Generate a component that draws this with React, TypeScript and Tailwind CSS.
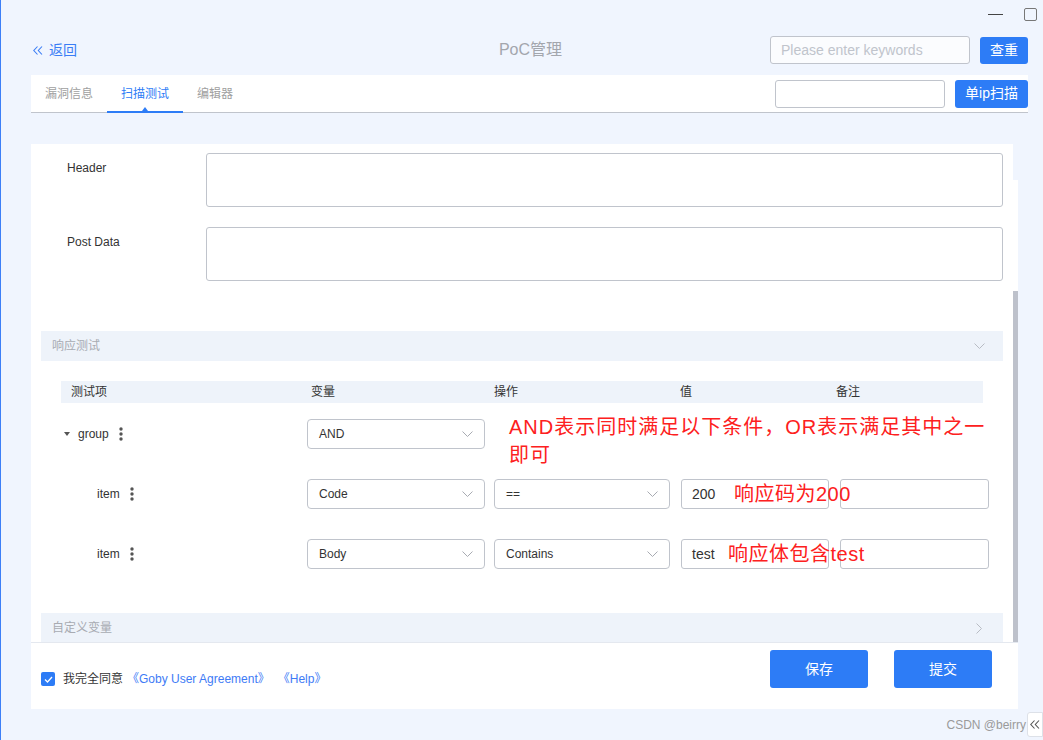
import React from "react";

function ChevronDown({ className = "" }: { className?: string }) {
  return (
    <svg width="11" height="6" viewBox="0 0 11 6" className={className} fill="none">
      <path d="M0.5 0.5 L5.5 5.5 L10.5 0.5" stroke="currentColor" strokeWidth="1" />
    </svg>
  );
}

function ChevronRight({ className = "" }: { className?: string }) {
  return (
    <svg width="6" height="11" viewBox="0 0 6 11" className={className} fill="none">
      <path d="M0.5 0.5 L5.5 5.5 L0.5 10.5" stroke="currentColor" strokeWidth="1" />
    </svg>
  );
}

function DoubleLeft({ className = "" }: { className?: string }) {
  return (
    <svg width="10" height="9" viewBox="0 0 10 9" className={className} fill="none">
      <path d="M4.5 0.5 L0.8 4.5 L4.5 8.5 M9 0.5 L5.3 4.5 L9 8.5" stroke="currentColor" strokeWidth="1.1" />
    </svg>
  );
}

function Dots() {
  return (
    <svg width="4" height="14" viewBox="0 0 4 14">
      <circle cx="2" cy="2" r="1.7" fill="#555" />
      <circle cx="2" cy="7" r="1.7" fill="#555" />
      <circle cx="2" cy="12" r="1.7" fill="#555" />
    </svg>
  );
}

function Select({ value, className = "" }: { value: string; className?: string }) {
  return (
    <div
      className={`shrink-0 flex items-center justify-between h-[30px] border border-[#c0c4cc] rounded-[4px] pl-[11px] pr-[11px] text-[12px] text-[#333] bg-white ${className}`}
    >
      <span>{value}</span>
      <ChevronDown className="text-[#a8abb2]" />
    </div>
  );
}

function Field({ value = "", className = "" }: { value?: string; className?: string }) {
  return (
    <div
      className={`shrink-0 h-[30px] border border-[#c0c4cc] rounded-[3px] pl-[10px] flex items-center text-[14px] text-[#333] bg-white ${className}`}
    >
      {value}
    </div>
  );
}

export default function App() {
  return (
    <div className="relative w-[1043px] h-[740px] overflow-hidden bg-[#f0f5fe] border-l border-[#3d7ff7] font-['Liberation_Sans','Noto_Sans_CJK_SC',sans-serif] text-[#333]">
      {/* window controls */}
      <div className="h-[35px] flex justify-end items-start pt-[8px] pr-[6px]">
        <div className="flex items-center gap-[21px] h-[13px]">
          <div className="w-[15px] h-px bg-[#444]" />
          <div className="w-[13px] h-[13px] border border-[#777] rounded-[2px]" />
        </div>
      </div>

      {/* header row */}
      <div className="grid grid-cols-[1fr_auto_1fr] items-center h-[30px] pl-[32px] pr-[15px]">
        <div className="flex items-center gap-[6px] text-[#3a7df5] text-[14px] leading-none">
          <DoubleLeft />
          <span>返回</span>
        </div>
        <div className="text-[16px] text-[#a3a6ad] leading-none">PoC管理</div>
        <div className="flex justify-end items-center gap-[10px]">
          <div className="w-[200px] h-[28px] border border-[#c0c4cc] rounded-[3px] bg-[#fbfcfe] pl-[10px] flex items-center text-[14px] text-[#c0c4cc]">
            Please enter keywords
          </div>
          <div className="w-[48px] h-[27px] bg-[#2d7cf6] rounded-[3px] text-white text-[14px] flex items-center justify-center">
            查重
          </div>
        </div>
      </div>

      {/* tab bar */}
      <div className="mt-[10px] ml-[30px] mr-[15px] h-[38px] bg-white border-b border-[#c0c4cc] flex justify-between">
        <div className="flex text-[12px]">
          <div className="px-[14px] flex items-center text-[#a0a0a0]">漏洞信息</div>
          <div className="relative px-[14px] flex items-center text-[#2d7cf6]">
            扫描测试
            <div className="absolute left-0 right-0 bottom-[-1px] h-[2px] bg-[#2d7cf6]" />
            <div className="absolute left-1/2 -translate-x-1/2 bottom-[1px] w-0 h-0 border-x-[3px] border-b-[4px] border-x-transparent border-b-[#2d7cf6]" />
          </div>
          <div className="px-[14px] flex items-center text-[#a0a0a0]">编辑器</div>
        </div>
        <div className="flex items-center gap-[10px]">
          <div className="w-[170px] h-[28px] border border-[#c0c4cc] rounded-[3px] bg-white" />
          <div className="w-[73px] h-[28px] bg-[#2d7cf6] rounded-[3px] text-white text-[14px] flex items-center justify-center">
            单ip扫描
          </div>
        </div>
      </div>

      {/* panel */}
      <div className="mt-[31px] ml-[30px] w-[987px] flex flex-col">
        <div className="flex h-[498px]">
          <div className="w-[982px] bg-white overflow-hidden pt-[9px]">
            {/* Header */}
            <div className="flex">
              <div className="w-[175px] pl-[36px] pt-[7px] text-[12px] leading-[16px] text-[#333]">Header</div>
              <div className="w-[797px] h-[54px] border border-[#c0c4cc] rounded-[3px]" />
            </div>
            <div className="flex mt-[20px]">
              <div className="w-[175px] pl-[36px] pt-[7px] text-[12px] leading-[16px] text-[#333]">Post Data</div>
              <div className="w-[797px] h-[54px] border border-[#c0c4cc] rounded-[3px]" />
            </div>

            {/* 响应测试 */}
            <div className="mt-[50px] mx-[10px] h-[30px] bg-[#eef3fa] flex items-center justify-between pl-[11px] pr-[18px]">
              <span className="text-[12px] text-[#a8abb2]">响应测试</span>
              <ChevronDown className="text-[#b8bcc4]" />
            </div>

            <div className="mx-[30px] mt-[20px]">
              <div className="h-[22px] bg-[#eef3fa] flex items-center text-[12px] text-[#333]">
                <div className="w-[240px] pl-[10px]">测试项</div>
                <div className="w-[183px] pl-[10px]">变量</div>
                <div className="w-[186px] pl-[10px]">操作</div>
                <div className="w-[156px] pl-[10px]">值</div>
                <div className="flex-1 pl-[10px]">备注</div>
              </div>

              {/* group row */}
              <div className="relative mt-[16px] h-[30px] flex items-center">
                <div className="shrink-0 w-[246px] flex items-center">
                  <div className="ml-[3px] w-0 h-0 border-x-[3.5px] border-t-[4px] border-x-transparent border-t-[#555]" />
                  <span className="ml-[8px] text-[12px] text-[#333]">group</span>
                  <span className="ml-[10px] flex"><Dots /></span>
                </div>
                <Select value="AND" className="w-[178px]" />
                <div className="absolute left-[448px] top-[-6px] text-[20px] leading-[28px] tracking-[1px] text-[#fd2020] whitespace-nowrap">
                  AND表示同时满足以下条件，OR表示满足其中之一
                  <br />
                  即可
                </div>
              </div>

              {/* item 1 */}
              <div className="relative mt-[30px] h-[30px] flex items-center">
                <div className="shrink-0 w-[246px] flex items-center pl-[36px]">
                  <span className="text-[12px] text-[#333]">item</span>
                  <span className="ml-[10px] flex"><Dots /></span>
                </div>
                <Select value="Code" className="w-[178px]" />
                <Select value="==" className="ml-[9px] w-[176px]" />
                <Field value="200" className="ml-[11px] w-[148px]" />
                <Field className="ml-[11px] w-[149px]" />
                <div className="absolute left-[673px] top-0 h-[30px] leading-[30px] text-[20px] tracking-[0.5px] text-[#fd2020] whitespace-nowrap">
                  响应码为200
                </div>
              </div>

              {/* item 2 */}
              <div className="relative mt-[30px] h-[30px] flex items-center">
                <div className="shrink-0 w-[246px] flex items-center pl-[36px]">
                  <span className="text-[12px] text-[#333]">item</span>
                  <span className="ml-[10px] flex"><Dots /></span>
                </div>
                <Select value="Body" className="w-[178px]" />
                <Select value="Contains" className="ml-[9px] w-[176px]" />
                <Field value="test" className="ml-[11px] w-[148px]" />
                <Field className="ml-[11px] w-[149px]" />
                <div className="absolute left-[667px] top-0 h-[30px] leading-[30px] text-[20px] tracking-[0.5px] text-[#fd2020] whitespace-nowrap">
                  响应体包含test
                </div>
              </div>
            </div>

            {/* 自定义变量 */}
            <div className="mt-[44px] mx-[10px] h-[30px] bg-[#eef3fa] flex items-center justify-between pl-[11px] pr-[21px]">
              <span className="text-[12px] text-[#a8abb2]">自定义变量</span>
              <ChevronRight className="text-[#b8bcc4]" />
            </div>
          </div>
          <div className="w-[5px] flex flex-col">
            <div className="h-[36px]" />
            <div className="h-[111px] bg-white" />
            <div className="flex-1 bg-[#bdc1cb]" />
          </div>
        </div>

        {/* footer */}
        <div className="h-[67px] bg-white border-t border-[#e4e8ef] flex justify-between items-start">
          <div className="mt-[27px] pl-[10px] flex items-center text-[12px]">
            <div className="w-[14px] h-[14px] rounded-[2px] bg-[#2d7cf6] flex items-center justify-center">
              <svg width="9" height="7" viewBox="0 0 9 7" fill="none">
                <path d="M1 3.5 L3.5 6 L8 1" stroke="white" strokeWidth="1.3" />
              </svg>
            </div>
            <span className="ml-[8px] text-[#333]">我完全同意</span>
            <span className="ml-[4px] text-[#3e7bf6]">《Goby User Agreement》</span>
            <span className="ml-[8px] text-[#3e7bf6]">《Help》</span>
          </div>
          <div className="mt-[7px] pr-[26px] flex gap-[26px]">
            <div className="w-[98px] h-[38px] bg-[#2d7cf6] rounded-[3px] text-white text-[14px] flex items-center justify-center">
              保存
            </div>
            <div className="w-[98px] h-[38px] bg-[#2d7cf6] rounded-[3px] text-white text-[14px] flex items-center justify-center">
              提交
            </div>
          </div>
        </div>
      </div>

      {/* watermark */}
      <div className="absolute right-0 bottom-[3px] flex items-center">
        <span className="text-[12px] text-[#9a9a9a] mr-[1px]">CSDN @beirry</span>
        <div className="w-[16px] h-[25px] bg-white border border-[#dde1e8] rounded-l-[3px] flex items-center justify-center text-[#555]">
          <DoubleLeft />
        </div>
      </div>
    </div>
  );
}
